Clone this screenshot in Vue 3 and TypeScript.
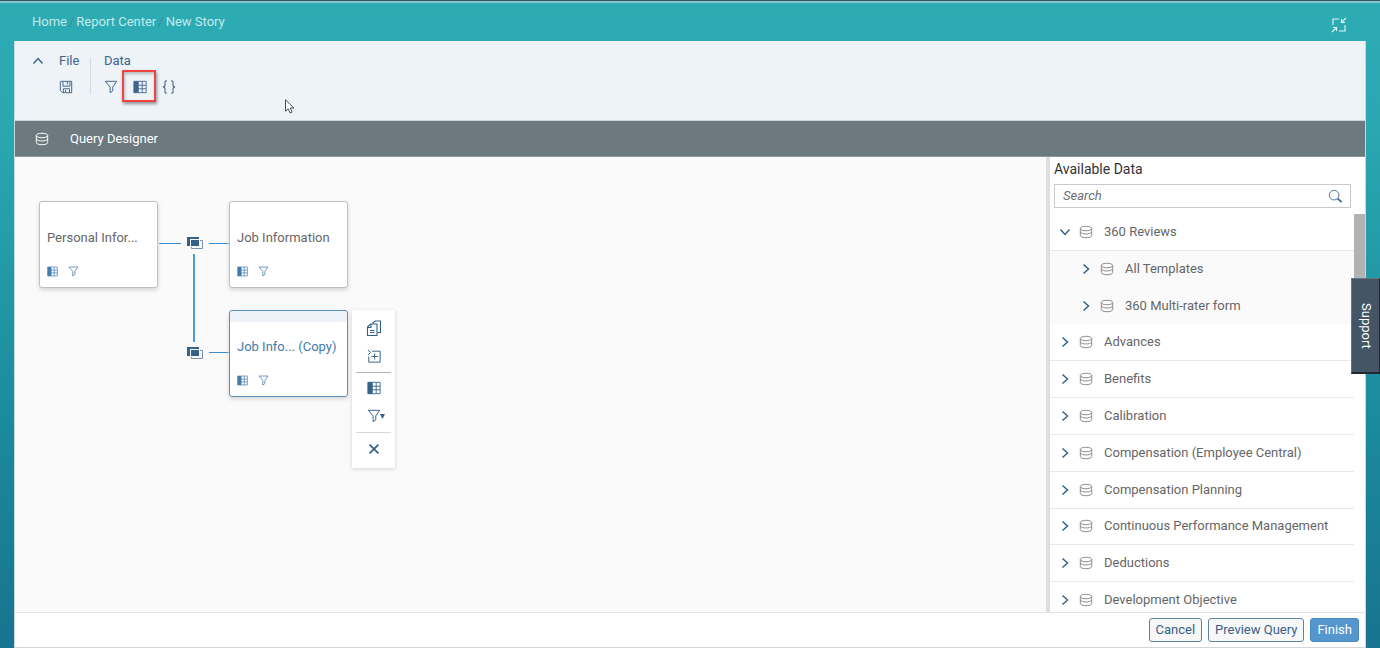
<script setup lang="ts">
import { ref, h, type FunctionalComponent } from 'vue'

interface TreeRow {
  label: string
  level: number
  open?: boolean
}

const paths: Record<string, string[]> = {
  save: ['M2 1.5h12.5v13H4L1.5 12V2z', 'M4.5 2v5h8V2M9.5 2v3', 'M5 14.5V10h7v4.5M7.5 14v-2.5'],
  filter: ['M1.5 1.5h13L10 8v4.5L7 14.5V8z'],
  fit: ['M2 8V2h6M8 14h6V8', 'M15 1l-4.5 4.5M10.5 2v3.5H14', 'M1 15l4.5-4.5M2 10.5h3.5V14'],
  database: ['M1.5 4c0-3.4 13-3.4 13 0s-13 3.4-13 0z', 'M1.5 4v8c0 3.4 13 3.4 13 0V4', 'M1.5 8c1.5 3 11.5 3 13 0'],
  copy: ['M1.5 7l3-3H11v11.5H1.5z', 'M1.5 7.5h3.5V4', 'M6.5 3.500L9 1h5.500v11.500H11.500', 'M4 10.500h4.500M4 12.500h4.500'],
  insert: ['M1 1l3 3-3 3', 'M6 2.5h9V15H2V8.5', 'M5 8.5h7.5M8.75 5v7'],
}

const LineIcon: FunctionalComponent<{ name: string }> = (props) =>
  h(
    'svg',
    { viewBox: '0 0 16 16', fill: 'none', stroke: 'currentColor', 'stroke-width': 1.1, 'aria-hidden': 'true' },
    paths[props.name].map((d) => h('path', { d })),
  )
LineIcon.props = ['name']

const TableIcon: FunctionalComponent = () =>
  h('svg', { viewBox: '0 0 16 16', fill: 'none', stroke: 'currentColor', 'aria-hidden': 'true' }, [
    h('path', { d: 'M1 1.5h5v13H1z', fill: 'currentColor' }),
    h('path', { d: 'M6 1.5h9v13H6M6 6h9M6 10h9M10.5 1.5v13' }),
  ])

const Chevron: FunctionalComponent = () =>
  h('svg', { viewBox: '0 0 12 12', fill: 'none', stroke: 'currentColor', 'stroke-width': 1.5, 'aria-hidden': 'true' }, [
    h('path', { d: 'M3.5 1.5L8.5 6l-5 4.5' }),
  ])

const JoinIcon: FunctionalComponent = () =>
  h('svg', { viewBox: '0 0 16 12', 'aria-hidden': 'true' }, [
    h('path', { d: 'M0 0h12v2H3v7H0z', fill: '#346187' }),
    h('path', { d: 'M4 3h8v6H4z', fill: '#346187' }),
    h('path', { d: 'M13 3.5h2.5v8h-11V10', fill: 'none', stroke: '#7d8fb0' }),
  ])

const crumbs = ['Home', 'Report Center', 'New Story']
const search = ref('')
const nodes = [
  { id: 'personal', label: 'Personal Infor...' },
  { id: 'job', label: 'Job Information' },
  { id: 'copy', label: 'Job Info... (Copy)' },
]
const rows = ref<TreeRow[]>([
  { label: '360 Reviews', level: 1, open: true },
  { label: 'All Templates', level: 2 },
  { label: '360 Multi-rater form', level: 2 },
  { label: 'Advances', level: 1 },
  { label: 'Benefits', level: 1 },
  { label: 'Calibration', level: 1 },
  { label: 'Compensation (Employee Central)', level: 1 },
  { label: 'Compensation Planning', level: 1 },
  { label: 'Continuous Performance Management', level: 1 },
  { label: 'Deductions', level: 1 },
  { label: 'Development Objective', level: 1 },
])
</script>

<template>
  <div class="shell">
    <header class="top">
      <nav class="crumbs" aria-label="Breadcrumb">
        <template v-for="(c, i) in crumbs" :key="c">
          <span v-if="i" class="slash">/</span>
          <a href="#">{{ c }}</a>
        </template>
      </nav>
      <button class="fit" aria-label="Exit full screen"><LineIcon name="fit" /></button>
    </header>

    <main class="window">
      <section class="toolbar">
        <button class="collapse" aria-label="Collapse toolbar"><Chevron /></button>
        <div class="group">
          <span class="caption">File</span>
          <div class="tools">
            <button aria-label="Save"><LineIcon name="save" /></button>
          </div>
        </div>
        <div class="group data">
          <span class="caption">Data</span>
          <div class="tools">
            <button aria-label="Filter"><LineIcon name="filter" /></button>
            <button class="marked" aria-label="Columns"><TableIcon /></button>
            <button aria-label="Formula">
              <svg viewBox="0 0 16 16" fill="none" stroke="currentColor" stroke-width="1.2" aria-hidden="true">
                <path d="M5.5 1C2.5 1 3.5 3 3.5 5c0 2-1 3-2.5 3C2.5 8 3.5 9 3.5 11c0 2-1 4 2 4M10.5 1C13.5 1 12.5 3 12.5 5c0 2 1 3 2.5 3C13.5 8 12.5 9 12.5 11c0 2 1 4-2 4" />
              </svg>
            </button>
          </div>
        </div>
      </section>

      <h1 class="title"><LineIcon name="database" /><span>Query Designer</span></h1>

      <div class="body">
        <section class="canvas" aria-label="Query diagram">
          <i class="link out"></i>
          <i class="link in-top"></i>
          <i class="link down"></i>
          <i class="link in-bottom"></i>
          <button class="join first" aria-label="Edit join"><JoinIcon /></button>
          <button class="join second" aria-label="Edit join"><JoinIcon /></button>
          <article v-for="n in nodes" :key="n.id" class="node" :class="n.id">
            <span class="name">{{ n.label }}</span>
            <div class="node-tools">
              <button aria-label="Columns"><TableIcon /></button>
              <button aria-label="Filter"><LineIcon name="filter" /></button>
            </div>
          </article>
          <div class="menu" role="toolbar" aria-label="Table actions">
            <button class="duplicate" aria-label="Duplicate"><LineIcon name="copy" /></button>
            <button aria-label="Insert"><LineIcon name="insert" /></button>
            <hr />
            <button aria-label="Columns"><TableIcon /></button>
            <button class="menu-filter" aria-label="Filter">
              <LineIcon name="filter" />
              <svg class="caret" viewBox="0 0 5 5" aria-hidden="true"><path d="M0 0h5L2.5 5z" fill="currentColor" /></svg>
            </button>
            <hr class="light" />
            <button aria-label="Remove">
              <svg viewBox="0 0 16 16" fill="none" stroke="currentColor" stroke-width="2" aria-hidden="true"><path d="M3 3l10 10M13 3L3 13" /></svg>
            </button>
          </div>
        </section>

        <aside class="side">
          <h2>Available Data</h2>
          <div class="search">
            <input v-model="search" type="text" placeholder="Search" aria-label="Search available data" />
            <button aria-label="Search">
              <svg viewBox="0 0 16 16" fill="none" stroke="currentColor" aria-hidden="true">
                <circle cx="7" cy="7" r="5.5" />
                <path d="M11 11l4.5 4" stroke-width="2" />
              </svg>
            </button>
          </div>
          <div class="scroller">
            <ul class="tree">
              <li v-for="r in rows" :key="r.label" :class="{ child: r.level === 2, open: r.open }">
                <button class="expander" :aria-label="'Expand ' + r.label"><Chevron /></button>
                <LineIcon class="db" name="database" />
                <span>{{ r.label }}</span>
              </li>
            </ul>
            <div class="track"><div class="thumb"></div></div>
          </div>
        </aside>
      </div>

      <footer class="actions">
        <button>Cancel</button>
        <button>Preview Query</button>
        <button class="primary">Finish</button>
      </footer>
    </main>

    <button class="support">Support</button>
    <svg class="pointer" viewBox="0 0 10 15" aria-hidden="true">
      <path d="M.5.8v11.4L3.2 9.8 5.2 14l1.9-.9L5.3 9h3.6z" fill="#fff" stroke="#333b45" stroke-width=".9" />
    </svg>
  </div>
</template>

<style>
body {
  margin: 0;
}
</style>

<style scoped>
* {
  box-sizing: border-box;
}
.shell {
  position: relative;
  display: flex;
  flex-direction: column;
  height: 100vh;
  padding: 0 14px;
  overflow: hidden;
  font: 13px/18px Roboto, "Liberation Sans", Arial, sans-serif;
  color: #666;
  background: linear-gradient(#2dacb4 0%, #2aa7b1 20%, #1b8a9d 65%, #187390 100%);
  border-top: 1px solid #3b5560;
  box-shadow: inset 0 2px #86c5cb;
}
button {
  display: inline-flex;
  align-items: center;
  justify-content: center;
  padding: 0;
  border: 0;
  background: none;
  color: inherit;
  font: inherit;
}
svg {
  display: block;
  flex: none;
  width: 14px;
  height: 14px;
}
.top {
  display: flex;
  flex: none;
  justify-content: space-between;
  height: 40px;
  padding: 12px 19px 0 18px;
}
.crumbs {
  display: flex;
  gap: 2px;
}
.crumbs a {
  color: #c5e9ec;
  text-decoration: none;
}
.slash {
  color: #4f8589;
}
.fit {
  height: 24px;
  color: #e4f7f8;
}
.fit svg {
  width: 16px;
  height: 16px;
}
.window {
  display: flex;
  flex: 1;
  flex-direction: column;
  min-height: 0;
  border: 1px solid #c3d9dd;
  border-top: 0;
  border-bottom-color: #d5d5d5;
  background: #fff;
}
.toolbar {
  display: flex;
  flex: none;
  align-items: flex-start;
  height: 80px;
  padding: 11px 17px;
  border-bottom: 1px solid #cdd2d6;
  background: #edf3f7;
  color: #40648a;
}
.collapse {
  width: 12px;
  height: 18px;
}
.collapse svg {
  width: 12px;
  height: 12px;
  transform: rotate(-90deg);
}
.group {
  display: flex;
  flex-direction: column;
  gap: 2px;
  width: 21px;
  margin-left: 15px;
}
.group.data {
  position: relative;
  width: auto;
  margin-left: 24px;
}
.group.data::before {
  content: "";
  position: absolute;
  top: 6px;
  bottom: 8px;
  left: -14px;
  width: 1px;
  background: #d3dae1;
}
.tools {
  display: flex;
  gap: 15px;
}
.tools button {
  position: relative;
  height: 30px;
}
.marked::after {
  content: "";
  position: absolute;
  inset: -2px -9px 0 -11px;
  border: 2px solid #f04440;
  box-shadow: 1px 2px 3px #8b9198, inset 1px 2px 3px #b5bac0;
}
.title {
  display: flex;
  flex: none;
  gap: 21px;
  align-items: center;
  height: 36px;
  margin: 0;
  padding: 0 20px;
  border-bottom: 1px solid #8e979b;
  background: #6c797f;
  color: #fff;
  font-size: 13px;
  font-weight: 400;
}
.body {
  display: flex;
  flex: 1;
  min-height: 0;
}
.canvas {
  position: relative;
  flex: 1;
  min-width: 0;
  background: #fafafa;
}
.node {
  position: absolute;
  display: flex;
  flex-direction: column;
  justify-content: space-between;
  width: 119px;
  height: 87px;
  padding: 27px 7px 10px;
  border: 1px solid #c0c0c0;
  border-radius: 3px;
  background: #fff;
  box-shadow: 0 2px 4px #d4d4d4;
}
.personal {
  top: 44px;
  left: 24px;
}
.job {
  top: 44px;
  left: 214px;
}
.node.copy {
  top: 153px;
  left: 214px;
  border-color: #5b90bd;
  background: linear-gradient(#edf3f8 11px, #fff 11px);
  color: #427cac;
}
.node-tools {
  display: flex;
  gap: 10px;
  color: #427cac;
}
.node-tools svg {
  width: 11px;
  height: 11px;
}
.link {
  position: absolute;
  height: 1px;
  background: #338bd0;
}
.out {
  top: 86px;
  left: 144px;
  width: 22px;
}
.in-top {
  top: 86px;
  left: 194px;
  width: 20px;
}
.in-bottom {
  top: 195px;
  left: 194px;
  width: 20px;
}
.down {
  top: 97px;
  left: 178px;
  width: 2px;
  height: 88px;
  background: #4d9ddb;
}
.join {
  position: absolute;
  left: 172px;
}
.join svg {
  width: 16px;
  height: 12px;
}
.first {
  top: 80px;
}
.second {
  top: 190px;
}
.menu {
  position: absolute;
  top: 153px;
  left: 337px;
  display: flex;
  flex-direction: column;
  width: 43px;
  padding: 4px;
  background: #fff;
  box-shadow: 0 1px 4px #d0d0d0;
  color: #346187;
}
.menu button {
  height: 28px;
}
.menu hr {
  width: 100%;
  height: 1px;
  margin: 2px 0 1px;
  border: 0;
  background: #b5b5b5;
}
.menu .light {
  background: #d9d9d9;
}
.menu button:last-child {
  height: 30px;
}
.duplicate svg {
  width: 16px;
  height: 16px;
}
.menu-filter {
  position: relative;
}
.menu-filter .caret {
  position: absolute;
  top: 12px;
  right: 6px;
  width: 5px;
  height: 5px;
}
.side {
  display: flex;
  flex: none;
  flex-direction: column;
  width: 319px;
  border-left: 4px solid #dedede;
}
h2 {
  margin: 0;
  padding: 3px 4px 6px;
  color: #333;
  font-size: 14px;
  font-weight: 400;
  line-height: 18px;
}
.search {
  display: flex;
  flex: none;
  align-items: center;
  height: 24px;
  margin: 0 14px 6px 4px;
  padding: 0 8px;
  border: 1px solid #c9c9c9;
}
.search input {
  flex: 1;
  min-width: 0;
  padding: 0;
  border: 0;
  outline: 0;
  background: none;
  font: inherit;
}
.search input::placeholder {
  color: #707070;
  font-style: italic;
}
.search button {
  color: #40648a;
}
.scroller {
  display: flex;
  flex: 1;
  min-height: 0;
  overflow: hidden;
}
.tree {
  display: flex;
  flex: 1;
  flex-direction: column;
  height: 405px;
  margin: 0;
  padding: 0;
  list-style: none;
}
.tree li {
  display: flex;
  flex: 1;
  align-items: center;
  padding-left: 9px;
  border-bottom: 1px solid #e8e8e8;
}
.tree .child {
  padding-left: 30px;
  border-bottom-color: #fafafa;
  background: #fafafa;
}
.expander {
  margin-right: 8px;
  color: #346187;
}
.expander svg {
  width: 12px;
  height: 12px;
}
.open .expander svg {
  transform: rotate(90deg);
}
.db {
  margin-right: 11px;
  color: #8a8a8a;
}
.track {
  width: 11px;
}
.thumb {
  height: 120px;
  background: #b2b2b2;
}
.actions {
  display: flex;
  flex: none;
  gap: 6px;
  justify-content: flex-end;
  height: 35px;
  padding: 5px 6px;
  border-top: 1px solid #e2e2e2;
}
.actions button {
  height: 24px;
  padding: 0 6px;
  border: 1px solid #5b81a3;
  border-radius: 3px;
  background: #f7f7f7;
  color: #346187;
}
.actions .primary {
  border-color: #4a88c0;
  background: #5496cd;
  color: #fff;
}
.support {
  position: absolute;
  top: 277px;
  right: 0;
  width: 29px;
  height: 96px;
  border: 1px solid #68757f;
  border-right-color: #20272d;
  border-bottom: 2px solid #20272d;
  background: #445566;
  color: #fff;
  writing-mode: vertical-rl;
}
.pointer {
  position: absolute;
  top: 98px;
  left: 285px;
  width: 10px;
  height: 15px;
}
</style>
